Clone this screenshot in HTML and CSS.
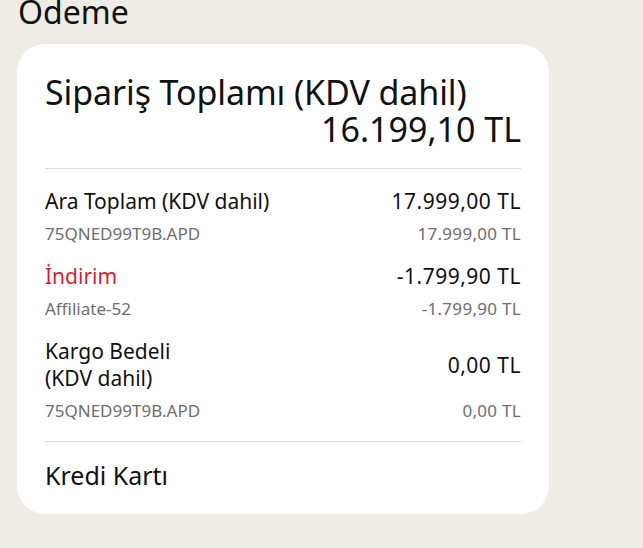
FILE: index.html
```html
<!DOCTYPE html>
<html lang="tr">
<head>
<meta charset="utf-8">
<link rel="stylesheet" href="styles.css">
</head>
<body>
<h1 class="page-title">Ödeme</h1>
<section class="card">
  <div class="total">
    <div class="total-label">Sipariş Toplamı (KDV dahil)</div>
    <div class="total-value">16.199,10 TL</div>
  </div>
  <div class="lines">
    <div class="item">
      <div class="row main"><span class="label">Ara Toplam (KDV dahil)</span><span class="value">17.999,00 TL</span></div>
      <div class="row sub"><span>75QNED99T9B.APD</span><span class="sub-value">17.999,00 TL</span></div>
    </div>
    <div class="item">
      <div class="row main"><span class="label discount">İndirim</span><span class="value">-1.799,90 TL</span></div>
      <div class="row sub"><span>Affiliate-52</span><span class="sub-value">-1.799,90 TL</span></div>
    </div>
    <div class="item">
      <div class="row main"><span class="label narrow">Kargo Bedeli (KDV dahil)</span><span class="value">0,00 TL</span></div>
      <div class="row sub"><span>75QNED99T9B.APD</span><span class="sub-value">0,00 TL</span></div>
    </div>
  </div>
  <div class="payment">Kredi Kartı</div>
</section>
</body>
</html>
```
FILE: styles.css
```css
html, body {
  margin: 0;
  padding: 0;
}
body {
  background: #efebe5;
  font-family: "Noto Sans", "Open Sans", sans-serif;
  color: #111;
  width: 643px;
  height: 548px;
  overflow: hidden;
}
.page-title {
  margin: -10px 0 0 18px;
  font-size: 32px;
  font-weight: 400;
  line-height: 44px;
  height: 44px;
}
.card {
  margin: 10px 0 0 17px;
  width: 532px;
  box-sizing: border-box;
  background: #fff;
  border-radius: 28px;
  padding: 28px 28px 23px 28px;
}
.total {
  display: flex;
  flex-direction: column;
  padding-bottom: 24px;
  border-bottom: 1px solid #dcdcdc;
}
.total-label {
  font-size: 34px;
  line-height: 40px;
  letter-spacing: -0.1px;
}
.total-value {
  font-size: 34px;
  line-height: 30px;
  margin-top: 2px;
  text-align: right;
}
.lines {
  padding: 19px 0 17px;
  border-bottom: 1px solid #dcdcdc;
  display: flex;
  flex-direction: column;
  gap: 16px;
}
.row {
  display: flex;
  justify-content: space-between;
  align-items: center;
}
.main {
  font-size: 21px;
  line-height: 27px;
}
.main .value {
  letter-spacing: 0.5px;
}
.label.narrow {
  width: 150px;
}
.discount {
  color: #d41f2c;
}
.sub {
  font-size: 17px;
  line-height: 26px;
  color: #6e6e6e;
  margin-top: 6px;
}
.sub-value {
  letter-spacing: 0.3px;
}
.payment {
  font-size: 25px;
  line-height: 32px;
  padding-top: 17px;
}
```
